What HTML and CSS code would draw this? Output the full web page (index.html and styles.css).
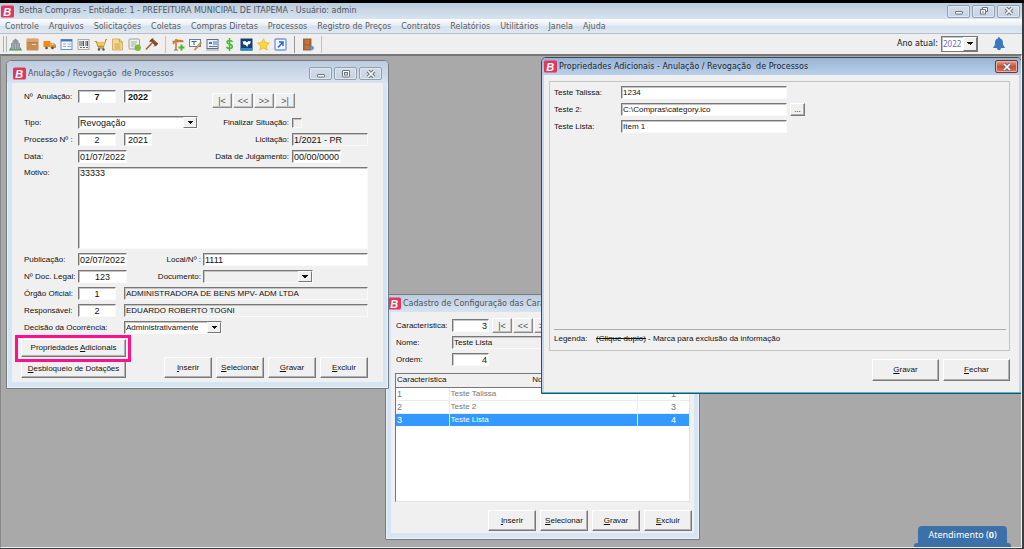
FILE: index.html
```html
<!DOCTYPE html>
<html lang="pt-BR">
<head>
<meta charset="utf-8">
<title>Betha Compras</title>
<link rel="stylesheet" href="styles.css">
</head>
<body>
<svg class="defs" aria-hidden="true">
  <symbol id="logo" viewBox="0 0 13 13"><rect y=".5" width="13" height="12" rx="1.500" fill="#e2375c"/><text x="6.200" y="10.500" text-anchor="middle" class="logo-letter">B</text></symbol>
  <symbol id="min" viewBox="0 0 12 10"><rect x="2.500" y="5.500" width="7" height="2.500" rx=".5" fill="#fff" stroke="#6b7580"/></symbol>
  <symbol id="max" viewBox="0 0 12 10"><rect x="2.500" y="1.500" width="7" height="6.500" rx=".5" fill="#fff" stroke="#6b7580"/><rect x="4.500" y="3.500" width="3" height="2.500" fill="#dce4ec" stroke="#6b7580"/></symbol>
  <symbol id="restore" viewBox="0 0 12 10"><path d="M4.500 1.500h5v4h-5z" fill="#fff" stroke="#6b7580"/><path d="M2.500 3.500h5v4.500h-5z" fill="#fff" stroke="#6b7580"/><path d="M4 6h2" stroke="#6b7580"/></symbol>
  <symbol id="close" viewBox="0 0 12 10"><path d="M3 2l6 6M9 2L3 8" stroke="#66707b" stroke-width="3.600"/><path d="M3 2l6 6M9 2L3 8" stroke="#fff" stroke-width="1.700"/></symbol>
</svg>
<div class="app">
  <header class="titlebar">
    <svg class="logo"><use href="#logo"/></svg>
    <h1 class="caption">Betha Compras - Entidade: 1 - PREFEITURA MUNICIPAL DE ITAPEMA - Usuário: admin</h1>
    <div class="winbtns">
      <button class="winbtn" aria-label="Minimizar"><svg><use href="#min"/></svg></button>
      <button class="winbtn" aria-label="Restaurar"><svg><use href="#restore"/></svg></button>
      <button class="winbtn" aria-label="Fechar"><svg><use href="#close"/></svg></button>
    </div>
  </header>
  <nav class="menu">
    <a href="#">Controle</a><a href="#">Arquivos</a><a href="#">Solicitações</a><a href="#">Coletas</a><a href="#">Compras Diretas</a><a href="#">Processos</a><a href="#">Registro de Preços</a><a href="#">Contratos</a><a href="#">Relatórios</a><a href="#">Utilitários</a><a href="#">Janela</a><a href="#">Ajuda</a>
  </nav>
  <div class="toolbar">
    <span class="grip"></span>
    <button class="tool" aria-label="Entidade"><svg viewBox="0 0 13 13"><path d="M0 12.500l1.500-3h10l1.500 3z" fill="#4a9c4a"/><path d="M2 5h9v6.500H2zM3.500 3l3-2.500 3 2.500v2h-6z" fill="#8d98a0"/><path d="M4 5.500v5.500M6.500 5.500v5.500M9 5.500v5.500" stroke="#b5bdc2" stroke-width=".8"/></svg></button>
    <button class="tool" aria-label="Materiais"><svg viewBox="0 0 13 13"><rect x=".5" y=".5" width="12" height="12" rx="1" fill="#c98d52"/><path d="M1 1h11v3.500H1z" fill="#dba56c"/><path d="M6 6.500h4" stroke="#f0d3ae"/><path d="M1 4.500h11" stroke="#a76e38" stroke-width=".6"/></svg></button>
    <button class="tool" aria-label="Fornecedores"><svg viewBox="0 0 13 13"><path d="M.5 3h7v6h-7z" fill="#ed8b16"/><path d="M7.500 5h3l2.500 2v3H7.500z" fill="#d98a30"/><path d="M8.500 5.500h1.500l1 1.500h-2.500z" fill="#c4e1f4"/><circle cx="3.500" cy="10" r="1.300" fill="#4d4d4d"/><circle cx="9.500" cy="10" r="1.300" fill="#4d4d4d"/></svg></button>
    <button class="tool" aria-label="Formulário"><svg viewBox="0 0 13 13"><rect x="1" y="1.500" width="11" height="10" fill="#f7fbff" stroke="#6693c3"/><path d="M1 2.500h11" stroke="#3c79bd" stroke-width="2"/><path d="M3 6h3M3 8.500h3M7.500 6H11M7.500 8.500H11" stroke="#8aabd2"/></svg></button>
    <button class="tool" aria-label="Código de barras"><svg viewBox="0 0 13 13"><rect x="1" y="1.500" width="11" height="10" fill="#f4f4f4" stroke="#9a9a9a" stroke-width=".8"/><path d="M3 3v5M5 3v5M6.500 3v5M9 3v5M10.500 3v5" stroke="#555"/><path d="M3 9.500h2m1 0h2m1 0h2" stroke="#666"/></svg></button>
    <button class="tool" aria-label="Compras"><svg viewBox="0 0 13 13"><path d="M.5 3.500h2l1.500 5h5.500l2.500-7H13" fill="none" stroke="#c78c19" stroke-width="1.200"/><path d="M3 4h8L9.500 8h-5z" fill="#e9bd50"/><path d="M3.500 6h7" stroke="#fff1bb" stroke-width=".6"/><path d="M4 10h6" stroke="#7e5e27"/><circle cx="5" cy="11.500" r="1.200" fill="#555"/><circle cx="9.500" cy="11.500" r="1.200" fill="#555"/></svg></button>
    <button class="tool" aria-label="Documento"><svg viewBox="0 0 13 13"><path d="M1.500 1h7l3 3v8h-10z" fill="#f5d88e" stroke="#c8a456" stroke-width=".8"/><path d="M8.500 1v3h3M3.500 6h6M3.500 8h6M3.500 10h6" fill="none" stroke="#bd9646" stroke-width=".8"/></svg></button>
    <button class="tool" aria-label="Aprovar"><svg viewBox="0 0 13 13"><rect x="1" y="1" width="10.500" height="10" rx="1" fill="#edf0ec" stroke="#9da59b"/><path d="M3 4h6M3 6h5M3 8h3" stroke="#9eae99"/><circle cx="9.700" cy="9.700" r="3.200" fill="#7cbc3b"/></svg></button>
    <button class="tool" aria-label="Julgamento"><svg viewBox="0 0 13 13"><path d="M7 5L1 11.500" stroke="#a46b3e" stroke-width="1.800"/><path d="M6 1.500L12 7" stroke="#8b4d2b" stroke-width="3.500"/><path d="M4.500 4l3.500-3.500M9 8.500L12.500 5" stroke="#663519"/></svg></button>
    <span class="sep"></span>
    <button class="tool" aria-label="Obra"><svg viewBox="0 0 13 13"><path d="M4 1v11M.5 3.500h11M1 6l3-4 7 1" fill="none" stroke="#cb783a" stroke-width="1.600"/><path d="M2 12h4" stroke="#777"/><path d="M9.500 6.500v6M6.500 9.500h6" stroke="#4cb630" stroke-width="2"/></svg></button>
    <button class="tool" aria-label="Editar texto"><svg viewBox="0 0 13 13"><rect x=".5" y="1.500" width="11" height="7" fill="#f6faff" stroke="#6a7f9e"/><path d="M2.500 3.500h5M5 3.500v3.500" stroke="#365f9b"/><path d="M11.500 4L6 10.500 5.500 12 7 11.500 12.500 5z" fill="#efa345" stroke="#9a642d" stroke-width=".5"/></svg></button>
    <button class="tool" aria-label="Relatório"><svg viewBox="0 0 13 13"><rect x="1" y="1.500" width="11" height="9" fill="#e6eefa" stroke="#606f88"/><path d="M3 4h3v2H3z" fill="#4876b8"/><path d="M7 4h4M7 6h4M3 8.500h8" stroke="#5575a3"/><path d="M0 12h13" stroke="#99a"/></svg></button>
    <button class="tool" aria-label="Valores"><svg viewBox="0 0 13 13"><path d="M9.500 4C8.500 1.800 3.800 2 4 4.300 4.200 6.800 9.300 5.800 9.300 8.600 9.300 11 4.800 11.200 3.500 9M6.500 0v13" fill="none" stroke="#4cb832" stroke-width="1.600"/></svg></button>
    <button class="tool" aria-label="Mapa"><svg viewBox="0 0 13 13"><rect x=".5" y=".5" width="12" height="12" fill="#143f72"/><path d="M.5 10h12v2.500H.5z" fill="#2e8bc9"/><path d="M2.500 3.500l3-.5 1 1.500 2-1.500 2.500.5-1 2.500-2 .5-.5 2.500-2-2-2-.5z" fill="#fff"/></svg></button>
    <button class="tool" aria-label="Favoritos"><svg viewBox="0 0 13 13"><path d="M6.500.8l1.800 3.700 4.100.5-3 2.900.8 4.100-3.700-2-3.700 2 .8-4.100-3-2.900 4.100-.5z" fill="#ffd83a" stroke="#e5ac24" stroke-width=".7"/></svg></button>
    <button class="tool" aria-label="Atalho"><svg viewBox="0 0 13 13"><rect x="1" y="1" width="11" height="11" rx="1" fill="#f4f8ff" stroke="#7798dc" stroke-width="1.400"/><path d="M4 9.500l4.500-5M5 4h4v4" fill="none" stroke="#2d60cc" stroke-width="1.400"/></svg></button>
    <span class="sep dark"></span>
    <button class="tool" aria-label="Sair"><svg viewBox="0 0 13 13"><path d="M2 .5h8.500v12H2z" fill="#a86332"/><path d="M4 2h4v4H4zM4 7.500h4V11H4z" fill="#bd7842"/><path d="M8 10h4M10.500 8l2 2-2 2" fill="none" stroke="#3e9ae0" stroke-width="1.300"/></svg></button>
    <span class="sep"></span>
    <label class="year-label" for="ano">Ano atual:</label>
    <span class="combo year"><select id="ano"><option>2022</option></select></span>
    <button class="bell" aria-label="Notificações"><svg viewBox="0 0 14 14"><path d="M7 0c1 0 1 1.200 1 1.500C11 2 11 5 11 7c0 1.500 1.500 2.500 2 4H1c.5-1.500 2-2.500 2-4 0-2 0-5 3-5.500C6 1.200 6 0 7 0zM5 11h4c0 3-4 3-4 0z" fill="#3d78bd"/></svg></button>
  </div>

  <main class="desktop">
    <section class="window config">
      <div class="wintitle"><svg class="logo"><use href="#logo"/></svg><h2 class="caption">Cadastro de Configuração das Características</h2></div>
      <div class="client">
        <div class="row"><label for="carac">Característica:</label><input id="carac" class="num" value="3">
          <div class="nav"><button>|&lt;</button><button>&lt;&lt;</button><button>&gt;&gt;</button><button>&gt;|</button></div></div>
        <div class="row"><label for="nome">Nome:</label><input id="nome" class="grow gray" value="Teste Lista"></div>
        <div class="row"><label for="ordem">Ordem:</label><input id="ordem" class="num" value="4"></div>
        <div class="listbox">
          <table>
            <colgroup><col class="c1"><col><col class="c3"></colgroup>
            <thead><tr><th class="first">Característica</th><th>Nome</th><th>Ordem</th></tr></thead>
            <tbody>
              <tr><td>1</td><td>Teste Talissa</td><td>1</td></tr>
              <tr><td>2</td><td>Teste 2</td><td>3</td></tr>
              <tr class="selected"><td>3</td><td>Teste Lista</td><td>4</td></tr>
            </tbody>
          </table>
        </div>
        <div class="actions"><button class="btn"><u>I</u>nserir</button><button class="btn"><u>S</u>elecionar</button><button class="btn"><u>G</u>ravar</button><button class="btn"><u>E</u>xcluir</button></div>
      </div>
    </section>

    <section class="window annul">
      <div class="wintitle"><svg class="logo"><use href="#logo"/></svg><h2 class="caption">Anulação / Revogação&nbsp; de Processos</h2>
        <div class="winbtns">
          <button class="winbtn" aria-label="Minimizar"><svg><use href="#min"/></svg></button>
          <button class="winbtn" aria-label="Maximizar"><svg><use href="#max"/></svg></button>
          <button class="winbtn" aria-label="Fechar"><svg><use href="#close"/></svg></button>
        </div>
      </div>
      <div class="client">
        <div class="row head"><label for="anul">Nº&nbsp; Anulação:</label><input id="anul" class="w38 bold" value="7"><input class="w28 bold" aria-label="Ano da anulação" value="2022">
          <div class="nav"><button>|&lt;</button><button>&lt;&lt;</button><button>&gt;&gt;</button><button>&gt;|</button></div></div>
        <div class="row"><label for="tipo">Tipo:</label><span class="combo w120"><select id="tipo" class="number"><option>Revogação</option></select></span>
          <label class="rlabel" for="fim">Finalizar Situação:</label><span class="rfield"><input type="checkbox" id="fim"></span></div>
        <div class="row"><label for="proc">Processo Nº :</label><input id="proc" class="w38" value="2"><input class="w28" aria-label="Ano do processo" value="2021">
          <label class="rlabel" for="lic">Licitação:</label><span class="rfield"><input id="lic" class="full gray number" value="1/2021 - PR"></span></div>
        <div class="row"><label for="data">Data:</label><input id="data" class="w48 number" value="01/07/2022">
          <label class="rlabel" for="julg">Data de Julgamento:</label><span class="rfield"><input id="julg" class="w48 number" value="00/00/0000"></span></div>
        <div class="row memo"><label for="motivo">Motivo:</label><textarea id="motivo">33333</textarea></div>
        <div class="row"><label for="pub">Publicação:</label><input id="pub" class="w48 number" value="02/07/2022"><label class="mlabel" for="local">Local/Nº :</label><input id="local" class="grow number" value="1111"></div>
        <div class="row"><label for="doc">Nº Doc. Legal:</label><input id="doc" class="w48 number center" value="123"><label class="mlabel" for="documento">Documento:</label><span class="combo w110 gray"><select id="documento"><option></option></select></span></div>
        <div class="row"><label for="org">Órgão Oficial:</label><input id="org" class="w38" value="1"><input class="grow gray" aria-label="Nome do órgão oficial" value="ADMINISTRADORA DE BENS MPV- ADM LTDA"></div>
        <div class="row"><label for="resp">Responsável:</label><input id="resp" class="w38" value="2"><input class="grow gray" aria-label="Nome do responsável" value="EDUARDO ROBERTO TOGNI"></div>
        <div class="row"><label class="wide" for="dec">Decisão da Ocorrência:</label><span class="combo w98"><select id="dec"><option>Administrativamente</option></select></span></div>
        <div class="bottom">
          <div class="stack"><span class="marked"><button class="btn small">Propriedades <u>A</u>dicionais</button></span><button class="btn small"><u>D</u>esbloqueio de Dotações</button></div>
          <div class="actions"><button class="btn"><u>I</u>nserir</button><button class="btn"><u>S</u>elecionar</button><button class="btn"><u>G</u>ravar</button><button class="btn"><u>E</u>xcluir</button></div>
        </div>
      </div>
    </section>

    <section class="window props">
      <div class="wintitle"><svg class="logo"><use href="#logo"/></svg><h2 class="caption">Propriedades Adicionais - Anulação / Revogação&nbsp; de Processos</h2>
        <button class="winbtn red" aria-label="Fechar"><svg><use href="#close"/></svg></button></div>
      <div class="client">
        <div class="group">
          <div class="row"><label for="p1">Teste Talissa:</label><input id="p1" class="w165" value="1234"></div>
          <div class="row"><label for="p2">Teste 2:</label><input id="p2" class="w165" value="C:\Compras\category.ico"><button class="dots" aria-label="Procurar">...</button></div>
          <div class="row"><label for="p3">Teste Lista:</label><input id="p3" class="w165" value="Item 1"></div>
          <p class="legend"><span class="legend-name">Legenda:</span><s>(Clique duplo)</s> - Marca para exclusão da informação</p>
        </div>
        <div class="actions"><button class="btn large"><u>G</u>ravar</button><button class="btn large"><u>F</u>echar</button></div>
      </div>
    </section>

    <button class="support">Atendimento (<b>0</b>)</button>
  </main>
</div>
</body>
</html>
```

FILE: styles.css
```css
* { box-sizing: border-box; }
body {
  margin: 0;
  background: #3a3d40;
  color: #111;
  font: 8px/12px "Liberation Sans", Arial, sans-serif;
}
button, input, select, textarea { font: inherit; color: inherit; margin: 0; border-radius: 0; }
button { padding: 0; }
h1, h2, p { margin: 0; }
.defs { position: absolute; width: 0; height: 0; }
.app {
  display: flex;
  flex-direction: column;
  min-height: 100vh;
  padding: 3px 2px 1px 0;
  background: linear-gradient(#000 3px, #3a3d40 3px);
}
.logo { width: 13px; height: 13px; flex: none; }
.logo-letter { font: italic bold 11px "Liberation Sans", sans-serif; fill: #fff; }
.caption {
  font: 8px/12px "DejaVu Sans", sans-serif;
  color: #4a5663;
  white-space: nowrap;
}

/* Main frame */
.titlebar {
  display: flex;
  align-items: center;
  gap: 5px;
  height: 16px;
  padding: 0 2px 0 1px;
  background: linear-gradient(#bccbdc, #d7e3f0);
}
.winbtns { display: flex; gap: 2px; margin-left: auto; }
.winbtn {
  display: flex;
  align-items: center;
  justify-content: center;
  width: 23px;
  height: 13px;
  border: 1px solid #929fae;
  border-radius: 2px;
  background: linear-gradient(#d2dde9, #c5d3e2);
  box-shadow: inset 0 0 0 1px #dfe8f2;
}
.winbtn svg { width: 12px; height: 10px; }
.menu {
  display: flex;
  gap: 10px;
  height: 15px;
  padding: 2px 5px 0;
  background: linear-gradient(#fcfdfe, #e8eef5 45%, #d6e1ec 50%, #dfe8f2);
  border-bottom: 1px solid #b8bec5;
}
.menu a {
  color: #5a5e64;
  text-decoration: none;
  font: 8px/12px "DejaVu Sans", sans-serif;
  white-space: nowrap;
}
.toolbar {
  display: flex;
  align-items: center;
  height: 20px;
  padding: 0 10px 0 3px;
  background: #efefef;
}
.grip { width: 4px; height: 16px; border: solid #b0b0b0; border-width: 0 1px; }
.tool { width: 17px; height: 17px; padding: 2px; border: 0; background: none; }
.tool svg { display: block; width: 13px; height: 13px; }
.sep { width: 1px; height: 17px; margin: 0 4px 0 5px; background: #c2c2c2; }
.sep.dark { background: #999; }
.year-label {
  margin-left: auto;
  padding-right: 3px;
  font: 8px/12px "DejaVu Sans", sans-serif;
}
.combo.year { width: 37px; height: 16px; color: #6a6ab8; border: 1px solid #777; }
.combo.year select { font-family: "Noto Sans", sans-serif; }
.bell { width: 14px; height: 14px; margin: 0 6px 0 14px; border: 0; background: none; }
.bell svg { display: block; width: 14px; height: 14px; }
.desktop {
  position: relative;
  flex: 1;
  overflow: hidden;
  background: #a9a9a9;
  border: 1px solid #efefef;
  border-top: 2px solid #777;
  border-left-color: #888;
}

/* Child windows */
.window {
  position: absolute;
  display: flex;
  flex-direction: column;
  padding: 0 5px 6px;
  border: 1px solid #737b84;
  border-radius: 5px 5px 0 0;
  background: #d7e4f2;
  box-shadow: inset 0 0 0 1px #e8f0f9;
}
.wintitle {
  display: flex;
  align-items: center;
  gap: 2px;
  height: 22px;
  margin: 0 -5px;
  padding: 3px 6px 0;
  border-radius: 4px 4px 0 0;
  background: linear-gradient(#bdccdd, #d7e3f1);
}
.client { flex: 1; display: flex; flex-direction: column; gap: 4px; background: #f0f0f0; }
.row { display: flex; align-items: center; height: 13px; }
label { white-space: nowrap; }
.annul { left: 5px; top: 4px; width: 383px; min-height: 329px; }
.annul .client { padding: 7px 15px 4px 12px; }
.config { left: 384px; top: 238px; width: 315px; min-height: 246px; }
.config .wintitle { height: 17px; padding: 0 2px; }
.config .client { padding: 7px 2px 2px 5px; }
.props {
  right: -1px;
  top: 1px;
  width: 481px;
  min-height: 337px;
  padding: 0 2px 1px;
  border-color: #3e4852;
  background: #c3d6ed;
  box-shadow: inset 0 -1px #35c4e8;
}
.props .wintitle { height: 17px; margin: 0 -2px; padding: 1px 3px 1px 2px; background: linear-gradient(#98b3d3, #bbd0ea); }
.props .caption { color: #20262e; }
.props .client { padding: 6px 9px 11px 5px; gap: 8px; }
.winbtn.red {
  margin-left: auto;
  border-color: #7c3430;
  background: linear-gradient(#e5a294, #c94f36 50%, #d7745c);
  box-shadow: inset 0 0 0 1px #e8b1a6;
}

/* Fields */
input, textarea, .combo {
  height: 13px;
  padding: 0 1px;
  border: 1px solid #fafafa;
  border-top-color: #777;
  border-left-color: #777;
  background: #fff;
  box-shadow: inset 1px 1px #c4c4c4;
  outline: 0;
  min-width: 0;
}
input.gray, .combo.gray { background: #f0f0f0; }
.combo { position: relative; display: block; padding: 0; }
.combo select {
  display: block;
  width: 100%;
  height: 100%;
  padding: 0 12px 0 1px;
  border: 0;
  background: none;
  appearance: none;
  outline: 0;
}
.combo::after {
  content: "";
  position: absolute;
  right: 0;
  top: 0;
  bottom: 0;
  width: 12px;
  border: 1px solid;
  border-color: #fff #777 #777 #fff;
  background: conic-gradient(from -45deg at 50% 75%, #111 90deg, #f0f0f0 0) center / 6px 4px no-repeat, #f0f0f0;
  pointer-events: none;
}
input[type="checkbox"] {
  appearance: none;
  display: block;
  width: 10px;
  height: 10px;
  padding: 0;
  background: #f0f0f0;
}
.w28, .w38 { text-align: center; font-size: 9px; }
.w28 { width: 28px; }
.w38 { width: 38px; }
.w48 { width: 49px; }
.w98 { width: 98px; }
.w110 { width: 110px; }
.w120 { width: 120px; }
.w165 { width: 166px; }
.w38 + input { margin-left: 8px; }
input.number { font-size: 9px; }
select.number { font-size: 9px; }
.center { text-align: center; }
.bold { font-weight: bold; }
.grow { flex: 1; }
.full { width: 100%; }
.annul .row > label:first-child { width: 54px; }
.annul .row > label.wide { width: 100px; }
.head { margin-bottom: 9px; }
.rlabel { margin-left: auto; padding-right: 3px; }
.rfield { width: 76px; }
.rfield input { display: block; }
.mlabel { width: 76px; padding-right: 2px; text-align: right; }
.memo { height: 82px; align-items: flex-start; }
.memo textarea { flex: 1; height: 82px; resize: none; line-height: 11px; font-size: 9px; }

/* Buttons */
.nav { display: flex; gap: 1px; margin-left: 60px; }
.nav button {
  width: 20px;
  height: 15px;
  border: 1px solid;
  border-color: #fff #888 #888 #fff;
  background: #f0f0f0;
  color: #555;
  font-size: 9px;
  box-shadow: inset -1px -1px #c2c2c2;
}
.head .nav { padding-top: 8px; }
.btn, .dots {
  border: 1px solid;
  border-color: #fff #777 #777 #fff;
  background: #f0f0f0;
  box-shadow: inset -1px -1px #b0b0b0;
}
.btn { width: 48px; height: 21px; white-space: nowrap; }
.btn.large { width: 67px; height: 22px; }
.btn.small { width: 105px; height: 18px; }
.dots { width: 15px; height: 13px; margin-left: 3px; line-height: 8px; }
.actions { display: flex; gap: 4px; justify-content: flex-end; align-items: flex-end; }
.bottom { display: flex; justify-content: space-between; margin: 1px 0 0 -3px; }
.stack { display: flex; flex-direction: column; gap: 3px; }
.marked { position: relative; display: flex; }
.marked::after {
  content: "";
  position: absolute;
  inset: -4px -5px -5px -6px;
  border: 3px solid #ff0f8c;
  pointer-events: none;
}

/* Characteristics list */
.config label { width: 56px; }
.num { width: 37px; text-align: right; font-size: 9px; }
.config .nav { margin-left: 3px; }
.listbox {
  flex: 1;
  margin: 3px 2px 4px -1px;
  border: 1px solid #e2e2e2;
  border-top-color: #777;
  border-left-color: #777;
  background: #fff;
}
table { width: 100%; border-collapse: collapse; table-layout: fixed; }
.c1 { width: 53px; }
.c3 { width: 52px; }
th, td { height: 13px; padding: 0 1px; line-height: 12px; text-align: left; }
th { font-weight: normal; text-align: center; background: #f0f0f0; border-bottom: 1px solid #777; white-space: nowrap; }
th.first { text-align: left; }
td { color: #777; border: solid #ececec; border-width: 0 1px 1px 0; }
td:first-child { font-size: 9px; }
td:last-child { font-size: 9px; text-align: right; padding-right: 13px; border-right: 0; }
.selected td { background: #3399ff; color: #fff; border-bottom: 0; }

/* Additional properties */
.group { flex: 1; display: flex; flex-direction: column; gap: 4px; padding: 4px 3px 5px 4px; border: 1px solid #c4c4c4; }
.props label { width: 67px; }
.legend { margin: auto 0 0; padding: 3px 0 0; border-top: 1px solid #aaa; }
.legend-name { display: inline-block; width: 42px; }

.support {
  position: absolute;
  right: 14px;
  bottom: 0;
  width: 89px;
  height: 21px;
  padding-bottom: 3px;
  border: 0;
  border-radius: 4px 4px 0 0;
  background: #3b70a8;
  color: #fff;
  font: 9px/12px "Noto Sans", sans-serif;
}
.support::after {
  content: "";
  position: absolute;
  left: -4px;
  right: -4px;
  bottom: 0;
  height: 4px;
  border-radius: 3px 3px 0 0;
  background: #3b70a8;
}
```
